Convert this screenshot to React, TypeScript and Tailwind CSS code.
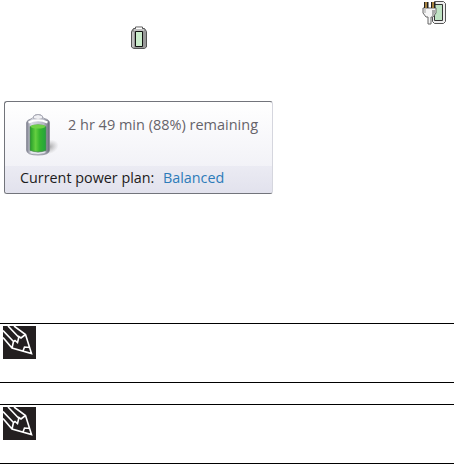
import React from 'react';

function BatteryTrayIcon() {
  return (
    <svg width="16" height="24" viewBox="0 0 16 24" className="block">
      <path d="M4.500 1h7v1.500h2l2 3V21l-2 1.500h-11L.5 21V5.500l2-3h2z" fill="#999" stroke="#555" />
      <path d="M5 1.500h6V3H5z" fill="#fff" />
      <path d="M2 6v15M3 4h10" stroke="#e8e8e8" fill="none" />
      <path d="M4.500 5.500h7v15h-7z" fill="#caeccb" stroke="#111" />
    </svg>
  );
}

function PluggedTrayIcon() {
  return (
    <svg width="25" height="25" viewBox="0 0 25 25" className="block">
      <path d="M12.500 1.500h9l2 2v18l-2 2h-9l-2-2v-18z" fill="#eee" stroke="#555" />
      <path d="M12.500 4.500h8v16h-8z" fill="#bfe3c3" stroke="#333" />
      <path d="M1 8h13v5l-3 4H9v7H6v-7H4l-3-4z" fill="#f5f5f5" stroke="#666" />
      <path d="M2 8.500h2V13H2z" fill="#ccc" />
      <path d="M10 10h3v3l-2 3h-1z" fill="#aaa" />
      <path d="M2 2h4.500v6H2zM9 2h4.500v6H9z" fill="#222" />
      <path d="M4 2v6M11 2v6" stroke="#d2a24b" strokeWidth="1.5" />
    </svg>
  );
}

function BatteryIcon() {
  return (
    <svg width="34" height="44" viewBox="0 0 34 44" className="block">
      <defs>
        <linearGradient id="shell">
          <stop offset="0" stopColor="#777988" />
          <stop offset=".2" stopColor="#d8dae3" />
          <stop offset=".75" stopColor="#b6b8c4" />
          <stop offset="1" stopColor="#666875" />
        </linearGradient>
        <linearGradient id="charge">
          <stop offset="0" stopColor="#239b28" />
          <stop offset=".35" stopColor="#64cf40" />
          <stop offset=".6" stopColor="#36b52e" />
          <stop offset="1" stopColor="#23a33c" />
        </linearGradient>
        <radialGradient id="shade">
          <stop offset="0" stopColor="#777" stopOpacity=".65" />
          <stop offset="1" stopColor="#999" stopOpacity="0" />
        </radialGradient>
      </defs>
      <ellipse cx="24" cy="34" rx="10" ry="7" fill="url(#shade)" transform="rotate(-20 24 34)" />
      <path d="M1.500 10Q1.500 7 7 5.500l2-2q0-2 4-2t4 2l2 2q5.500 1 5.500 4.500v27q0 5-11.500 5T1.500 37z" fill="url(#shell)" stroke="#8b8d99" strokeWidth=".8" />
      <path d="M8.500 3q4.500-3 9 0v2.500q-4.500 2-9 0z" fill="#f0f0f4" stroke="#9b9caa" strokeWidth=".7" />
      <path d="M3.500 9.500Q13 5 22.500 9.500" fill="none" stroke="#fff" strokeWidth="2" />
      <path d="M5 13.500q8-3.500 16 0v24q-8 3-16 0z" fill="url(#charge)" stroke="#54845d" strokeWidth=".6" />
      <ellipse cx="13" cy="13.500" rx="7.500" ry="2" fill="#6fd146" />
      <path d="M5.500 39q7.500 3 15 0" fill="none" stroke="#eceef3" />
    </svg>
  );
}

function PencilIcon() {
  return (
    <svg width="33" height="33" viewBox="0 0 33 33" className="block bg-[#231f20]">
      <path
        d="M11 0L22.500 8.500l6 19L9 22 0 11.500M5 0l10.500 11M0 4.500L10.500 15.500M9 22l1.500-6.500 1.500-1 2.500 2 1.500-6 2 1.500 4.500-3.500M20 25l1.500-4 5.500.5"
        fill="none"
        stroke="#fff"
        strokeWidth="1.600"
      />
    </svg>
  );
}

function Note() {
  return (
    <div className="h-[60px] border-y border-black pt-[2px] pl-[3px]">
      <PencilIcon />
    </div>
  );
}

export default function App() {
  return (
    <div className="h-[464px] w-[454px] overflow-hidden bg-white font-['Open_Sans',sans-serif]">
      <div className="flex h-[26px] justify-end pr-[7px]">
        <PluggedTrayIcon />
      </div>
      <div className="h-[75px] pl-[131px]">
        <BatteryTrayIcon />
      </div>

      {/* Power status flyout */}
      <div className="ml-1 flex h-[93px] w-[269px] flex-col overflow-hidden rounded-[3px] border border-[#72747b] border-r-[#d5d6de] bg-linear-to-b from-white to-[#ededf4]">
        <div className="flex h-[64px] pt-[11px] pl-5">
          <BatteryIcon />
          <div className="ml-[9px] h-5 w-[200px] origin-left scale-x-[0.966] text-[15px] leading-[22px] whitespace-nowrap text-[#66636a]">
            2 hr 49 min (88%) remaining
          </div>
        </div>
        <div className="flex flex-1 bg-linear-to-b from-[#ebebf3] to-[#e2e2ed] pl-[15px] text-[15px] leading-[23px] whitespace-nowrap">
          <div className="w-[143px] origin-left scale-x-[0.956] text-[#1c1b20]">Current power plan:</div>
          <div className="origin-left scale-x-[0.956] text-[#2d7bb9]">Balanced</div>
        </div>
      </div>

      <div className="mt-[129px] flex flex-col gap-[21px]">
        <Note />
        <Note />
      </div>
    </div>
  );
}
